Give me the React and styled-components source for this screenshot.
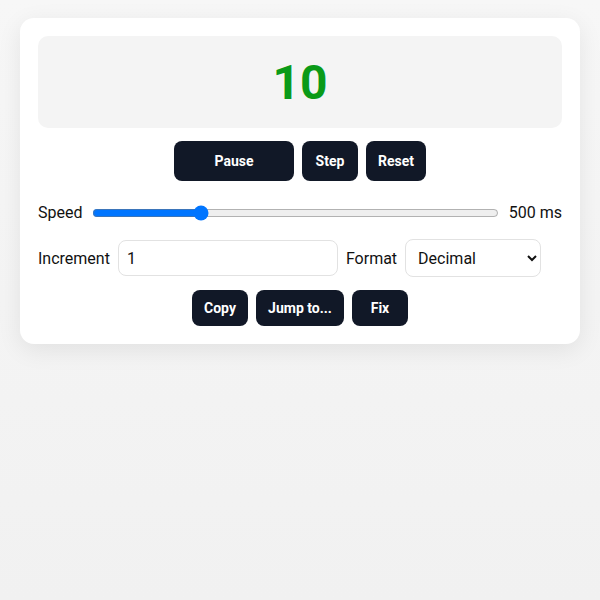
import React, { useState } from 'react';
import styled, { createGlobalStyle } from 'styled-components';

const GlobalStyle = createGlobalStyle`
  html, body {
    margin: 0;
    padding: 0;
  }
  body {
    min-height: 600px;
    background: linear-gradient(#f7f7f7, #f1f1f1);
    font-family: Roboto, "Liberation Sans", sans-serif;
    color: #111;
  }
`;

const Page = styled.div`
  padding: 18px 20px;
`;

const Card = styled.div`
  background: #fff;
  border-radius: 14px;
  padding: 18px;
  box-shadow: 0 6px 24px rgba(0, 0, 0, 0.08);
  display: flex;
  flex-direction: column;
  gap: 13px;
`;

const Display = styled.div`
  height: 92px;
  border-radius: 10px;
  background: #f4f4f4;
  display: flex;
  align-items: center;
  justify-content: center;
  font-size: 48px;
  font-weight: 700;
  color: #0a9a18;
`;

const ButtonRow = styled.div`
  display: flex;
  justify-content: center;
  gap: 8px;
`;

const Button = styled.button`
  height: ${(p) => (p.$small ? 36 : 40)}px;
  width: ${(p) => p.$w}px;
  border: none;
  border-radius: 8px;
  background: #111827;
  color: #fff;
  font-family: Roboto, "Liberation Sans", sans-serif;
  font-size: 14px;
  font-weight: 700;
  padding: 0;
  cursor: pointer;
`;

const Row = styled.div`
  display: flex;
  align-items: center;
  gap: 8px;
  font-size: 16px;
  margin-top: ${(p) => p.$top || 0}px;
`;

const Label = styled.span`
  white-space: nowrap;
`;

const Slider = styled.input`
  flex: 1;
  margin: 0 2px;
  accent-color: #0075ff;
`;

const TextInput = styled.input`
  width: 220px;
  height: 36px;
  box-sizing: border-box;
  border: 1px solid #e2e2e2;
  border-radius: 8px;
  padding: 0 8px;
  font-family: Roboto, "Liberation Sans", sans-serif;
  font-size: 16px;
  color: #111;
`;

const Select = styled.select`
  width: 136px;
  height: 38px;
  box-sizing: border-box;
  border: 1px solid #e2e2e2;
  border-radius: 8px;
  padding: 0 8px;
  background: #fff;
  font-family: Roboto, "Liberation Sans", sans-serif;
  font-size: 16px;
  color: #111;
`;

export default function App() {
  const [speed, setSpeed] = useState(500);
  const [inc, setInc] = useState('1');
  const [format, setFormat] = useState('Decimal');

  return (
    <Page>
      <GlobalStyle />
      <Card>
        <Display>10</Display>
        <ButtonRow>
          <Button $w={120}>Pause</Button>
          <Button $w={56}>Step</Button>
          <Button $w={60}>Reset</Button>
        </ButtonRow>
        <Row $top={9}>
          <Label>Speed</Label>
          <Slider
            type="range"
            min={50}
            max={1800}
            value={speed}
            onChange={(e) => setSpeed(Number(e.target.value))}
          />
          <Label>{speed} ms</Label>
        </Row>
        <Row $top={4}>
          <Label>Increment</Label>
          <TextInput value={inc} onChange={(e) => setInc(e.target.value)} />
          <Label>Format</Label>
          <Select value={format} onChange={(e) => setFormat(e.target.value)}>
            <option>Decimal</option>
            <option>Hex</option>
            <option>Binary</option>
          </Select>
        </Row>
        <ButtonRow>
          <Button $small $w={56}>Copy</Button>
          <Button $small $w={88}>Jump to...</Button>
          <Button $small $w={56}>Fix</Button>
        </ButtonRow>
      </Card>
    </Page>
  );
}
